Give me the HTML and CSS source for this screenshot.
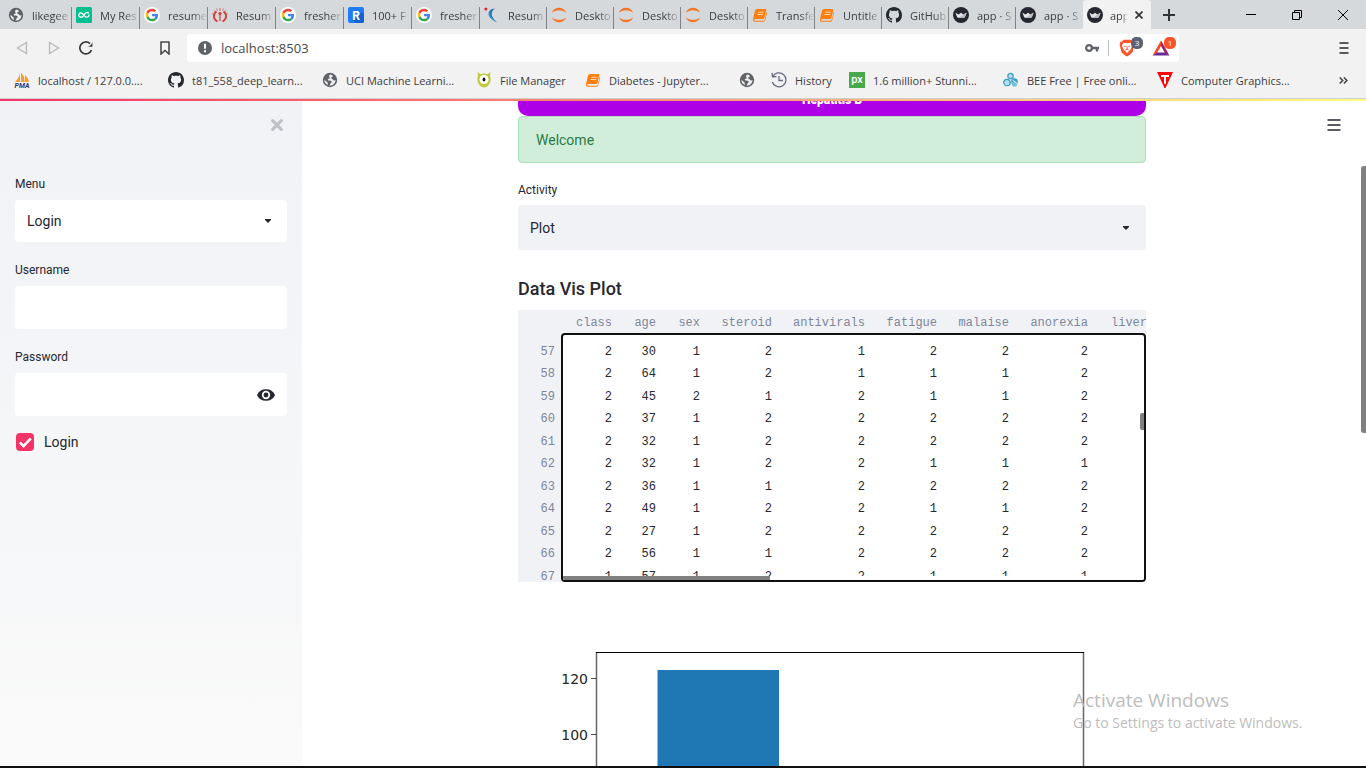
FILE: index.html
```html
<!DOCTYPE html>
<html lang="en">
<head>
<meta charset="utf-8">
<title>app · Streamlit</title>
<link rel="stylesheet" href="styles.css">
</head>
<body>
<svg class="sprite" aria-hidden="true">
  <symbol id="i-globe" viewBox="0 0 16 16"><circle cx="8" cy="8" r="7.2" fill="#5f6368"/><path d="M8.6 2.6c-1.6.5-2 1.8-1.1 2.8.7.8-.2 1.3-.9 1.4-1 .2-1.1 1.3-.3 1.7 1.2.5 3.200 0 3.400 1.200.1.900-1.200 1-1.300 2-.1.800-.8 1.400-1.500 1.700 3.200.7 6.600-1.500 6.600-5.400-1 .8-2.300.3-2.700-.5-.5-1-1.800-.7-1.700-1.700.1-.9 1.700-.6 1.900-1.600-.7-.8-1.500-1.300-2.400-1.600z" fill="#eceeef"/><path d="M2.400 7.800l3.200 2.600.3 2.700C3.700 12.300 2.300 10.200 2.400 7.800z" fill="#eceeef"/></symbol>
  <symbol id="i-google" viewBox="0 0 48 48"><circle cx="24" cy="24" r="24" fill="#fff"/><g transform="translate(5 5) scale(.79)"><path fill="#EA4335" d="M24 9.500c3.540 0 6.710 1.220 9.210 3.600l6.850-6.850C35.900 2.380 30.470 0 24 0 14.620 0 6.510 5.380 2.560 13.220l7.980 6.190C12.430 13.720 17.740 9.500 24 9.500z"/><path fill="#4285F4" d="M46.980 24.550c0-1.570-.15-3.090-.38-4.550H24v9.020h12.940c-.58 2.960-2.260 5.480-4.780 7.180l7.730 6c4.510-4.180 7.090-10.360 7.090-17.650z"/><path fill="#FBBC05" d="M10.530 28.590c-.48-1.450-.76-2.990-.76-4.590s.27-3.140.76-4.590l-7.980-6.190C.92 16.460 0 20.120 0 24s.92 7.540 2.560 10.780l7.970-6.190z"/><path fill="#34A853" d="M24 48c6.480 0 11.930-2.130 15.890-5.810l-7.730-6c-2.150 1.450-4.920 2.300-8.160 2.300-6.260 0-11.570-4.220-13.470-9.910l-7.980 6.190C6.510 42.620 14.620 48 24 48z"/></g></symbol>
  <symbol id="i-github" viewBox="0 0 16 16"><path fill="#24292f" d="M8 0C3.580 0 0 3.580 0 8c0 3.540 2.290 6.530 5.470 7.590.4.070.55-.17.55-.38 0-.19-.01-.82-.01-1.490-2.010.37-2.530-.49-2.690-.94-.09-.23-.48-.94-.82-1.130-.28-.15-.68-.52-.01-.53.63-.01 1.080.58 1.230.82.72 1.210 1.870.87 2.330.66.07-.52.28-.87.51-1.070-1.780-.2-3.640-.89-3.640-3.950 0-.87.31-1.590.82-2.150-.08-.2-.36-1.020.08-2.120 0 0 .67-.21 2.200.82.64-.18 1.320-.27 2-.27.68 0 1.360.09 2 .27 1.530-1.040 2.200-.82 2.200-.82.44 1.100.16 1.920.08 2.120.51.56.82 1.270.82 2.150 0 3.070-1.870 3.750-3.650 3.950.29.25.54.73.54 1.480 0 1.070-.01 1.930-.01 2.200 0 .21.15.46.55.38A8.013 8.013 0 0 0 16 8c0-4.420-3.580-8-8-8z"/></symbol>
  <symbol id="i-jupyter" viewBox="0 0 16 16"><path d="M.8 5.800C3.200-.9 12.800-.9 15.200 5.800 11.500 2.300 4.500 2.300.8 5.800zM.8 10.200c2.400 6.700 12 6.700 14.400 0-3.700 3.500-10.700 3.500-14.400 0z" fill="#f37726"/></symbol>
  <symbol id="i-book" viewBox="0 0 16 16"><path d="M5 2h8.500q1 0 .8 1L12.400 11q-.3 1-1.400 1H3.200q-1 0-1 .8t1 .9h8.300q1 0 1.300-1.200L14.500 5q.7.400.5 1.300l-1.800 7q-.4 1.500-2 1.500H3q-2.300-.1-2-2.600L3 3.500Q3.500 2 5 2z" fill="#ff7f0e"/><path d="M6 5.200h5.800M5.400 7.500h5.800" stroke="#ffe0c0" stroke-width=".9"/></symbol>
  <symbol id="i-crown" viewBox="0 0 16 16"><circle cx="8" cy="8" r="8" fill="#262730"/><path d="M2.400 5.800l3.200 1.700L8 5.700l2.400 1.800 3.200-1.700-1.700 4.200q-.3.700-1 .7H5.100q-.7 0-1-.7z" fill="#e6e6e9"/><path d="M10.400 7.500l3.200-1.700-1.700 4.200q-.3.700-1 .7H6z" fill="#bcbcc2"/></symbol>
</svg>

<header class="browser">
  <div class="titlebar">
    <div class="tabs" role="tablist">
      <button class="tab tab-wide" role="tab"><svg class="icon"><use href="#i-globe"/></svg><span class="tab-text">likegee</span></button>
      <button class="tab tab-wide" role="tab"><svg class="icon" viewBox="0 0 16 16"><rect width="16" height="16" rx="1.500" fill="#00bf8f"/><path d="M12.800 6.300C10.900 4.500 9 6 8 8S4.800 11 3.300 9.600c-1.400-1.500 0-4 2-3.600 2.300.4 2.700 4 5 4.200 2 .1 2.900-1.500 2.600-2.700" fill="none" stroke="#fff" stroke-width="1.300"/></svg><span class="tab-text">My Res</span></button>
      <button class="tab tab-wide" role="tab"><svg class="icon"><use href="#i-google"/></svg><span class="tab-text">resume</span></button>
      <button class="tab tab-wide" role="tab"><svg class="icon" viewBox="0 0 16 16"><g fill="none" stroke="#d23c3c"><path d="M5.500 14.500C1 12.500.8 7 4.500 4.500M10.500 14.500c4.500-2 4.700-7.500 1-10" stroke-width="1.800"/><path d="M8 14V7" stroke-width="1.200"/><path d="M8 1v3M4.600 1.500l.8 2M11.400 1.500l-.8 2M1.800 3.500l1.500 1.300M14.200 3.500l-1.500 1.300M.3 7h1.600M15.700 7h-1.600" stroke-width="1" opacity=".7"/></g><circle cx="8" cy="6.500" r="1.600" fill="#d23c3c"/></svg><span class="tab-text">Resum</span></button>
      <button class="tab tab-wide" role="tab"><svg class="icon"><use href="#i-google"/></svg><span class="tab-text">fresher</span></button>
      <button class="tab tab-wide" role="tab"><svg class="icon" viewBox="0 0 16 16"><rect width="16" height="16" rx="2" fill="#1f7cf5"/><path d="M5 13l9-8 2 2v7q0 2-2 2H8z" fill="#1462cc"/><text x="8" y="12.500" text-anchor="middle" class="mark mark-lg">R</text></svg><span class="tab-text">100+ F</span></button>
      <button class="tab tab-wide" role="tab"><svg class="icon"><use href="#i-google"/></svg><span class="tab-text">fresher</span></button>
      <button class="tab" role="tab"><svg class="icon" viewBox="0 0 16 16"><path d="M11 1.500C3.500 2 3.500 9 13 15.500 6.500 9.500 6 5 11 1.500z" fill="#1769aa"/><path d="M8.500 1.500C1.500 5 4 11.500 13 15.500 5.500 10 5 5.500 8.500 1.500z" fill="#2d8dd0"/><circle cx="1.800" cy="2" r="1.500" fill="#e8202a"/></svg><span class="tab-text">Resum</span></button>
      <button class="tab" role="tab"><svg class="icon"><use href="#i-jupyter"/></svg><span class="tab-text">Deskto</span></button>
      <button class="tab" role="tab"><svg class="icon"><use href="#i-jupyter"/></svg><span class="tab-text">Deskto</span></button>
      <button class="tab" role="tab"><svg class="icon"><use href="#i-jupyter"/></svg><span class="tab-text">Deskto</span></button>
      <button class="tab" role="tab"><svg class="icon"><use href="#i-book"/></svg><span class="tab-text">Transfe</span></button>
      <button class="tab" role="tab"><svg class="icon"><use href="#i-book"/></svg><span class="tab-text">Untitle</span></button>
      <button class="tab" role="tab"><svg class="icon"><use href="#i-github"/></svg><span class="tab-text">GitHub</span></button>
      <button class="tab" role="tab"><svg class="icon"><use href="#i-crown"/></svg><span class="tab-text">app · S</span></button>
      <button class="tab" role="tab"><svg class="icon"><use href="#i-crown"/></svg><span class="tab-text">app · S</span></button>
      <button class="tab tab-wide tab-active" role="tab" aria-selected="true"><svg class="icon"><use href="#i-crown"/></svg><span class="tab-text">app</span><svg class="tab-close" viewBox="0 0 8 8"><path d="M.5.5l7 7M7.500.5l-7 7" stroke="#333" stroke-width="1.700"/></svg></button>
    </div>
    <button class="new-tab" aria-label="New tab"><svg width="12" height="12" viewBox="0 0 12 12"><path d="M6 0v12M0 6h12" stroke="#333" stroke-width="2"/></svg></button>
    <div class="window-controls">
      <button aria-label="Minimize"><svg width="10" height="10"><path d="M0 4.500h10" stroke="#000"/></svg></button>
      <button aria-label="Restore"><svg width="10" height="10"><path d="M.5 2.500h7v7h-7zM2.500 2.500v-2h7v7h-2" fill="none" stroke="#000"/></svg></button>
      <button aria-label="Close"><svg width="10" height="10"><path d="M0 0l10 10M10 0L0 10" stroke="#000"/></svg></button>
    </div>
  </div>

  <div class="toolbar">
    <div class="nav-buttons">
      <button aria-label="Back"><svg width="12" height="14" viewBox="0 0 12 14"><path d="M10.500 1.500v11L1.500 7z" fill="none" stroke="#b9bbbd" stroke-width="1.400"/></svg></button>
      <button aria-label="Forward"><svg width="12" height="14" viewBox="0 0 12 14"><path d="M1.500 1.500v11L10.500 7z" fill="none" stroke="#b9bbbd" stroke-width="1.400"/></svg></button>
      <button aria-label="Reload"><svg width="14" height="14" viewBox="0 0 14 14"><path d="M12.500 9A6 6 0 1 1 11 2.600" fill="none" stroke="#3b3b3d" stroke-width="1.700"/><path d="M13.400.8v5H8.400q4-.8 5-5z" fill="#3b3b3d"/></svg></button>
    </div>
    <button class="bookmark-page" aria-label="Bookmark this page"><svg width="10" height="14" viewBox="0 0 10 14"><path d="M1 1h8v12L5 9.500 1 13z" fill="none" stroke="#4a4a4c" stroke-width="1.600"/></svg></button>
    <div class="address">
      <svg width="14" height="14" viewBox="0 0 14 14"><circle cx="7" cy="7" r="7" fill="#5f6368"/><path d="M7 2.800v5M7 9.300v2" stroke="#fff" stroke-width="2"/></svg>
      <input class="url" type="text" aria-label="Address" value="localhost:8503">
      <svg width="14" height="10" viewBox="0 0 14 10"><circle cx="4" cy="5" r="2.900" fill="none" stroke="#5f6368" stroke-width="2.200"/><path d="M7 5h7M12 5v3.500" stroke="#5f6368" stroke-width="2.400"/></svg>
      <span class="divider"></span>
      <button class="extension" aria-label="Brave Shields"><svg width="16" height="18" viewBox="0 0 16 18"><path d="M4.500.8h7L13 2.500l1.600.2.800 2.500-1.700 7.500Q13 14.500 8 17.500 3 14.500 2.300 12.700L.6 5.200l.8-2.500L3 2.500z" fill="#fb542b"/><path d="M4.500 3.700l3.500.6 3.500-.6 1.700 2.700-1.700 4-3.500 3.500-3.500-3.500-1.700-4z" fill="#fff"/><path d="M5 7l1.800.7M11 7l-1.800.7M8 7.500v2.700M6.300 11l1.700-.8 1.700.8" fill="none" stroke="#fb542b" stroke-width=".9"/></svg><span class="badge badge-gray">3</span></button>
      <button class="extension" aria-label="Brave Rewards"><svg width="18" height="18" viewBox="0 0 18 18"><path d="M9 1.500L.5 16.500 5 14l4-7z" fill="#ff4724"/><path d="M9 1.500l8.500 15L13 14 9 7z" fill="#9e1f63"/><path d="M.5 16.500h17L13 13.500H5z" fill="#662d91"/></svg><span class="badge badge-red">1</span></button>
    </div>
    <button class="app-menu" aria-label="Customize"><svg width="10" height="12" viewBox="0 0 10 12"><path d="M.5 1h9M.5 6h9M.5 11h9" stroke="#5a5a5c" stroke-width="1.900"/></svg></button>
  </div>

  <nav class="bookmarks" aria-label="Bookmarks">
    <a href="#"><svg class="icon" viewBox="0 0 16 16"><path d="M6 1v9H1q3.500-3 5-9zM7 .5q4 4 3.500 9.500H7zM11 3q3.500 3 4 7h-4z" fill="#f89c2e"/><text x="8" y="15.500" text-anchor="middle" class="mark mark-pma">PMA</text></svg>localhost / 127.0.0....</a>
    <a href="#"><svg class="icon"><use href="#i-github"/></svg>t81_558_deep_learn...</a>
    <a href="#"><svg class="icon"><use href="#i-globe"/></svg>UCI Machine Learni...</a>
    <a href="#"><svg class="icon" viewBox="0 0 16 16"><path d="M1.500 0l3 2.200q3.500-1.400 7 0l3-2.200-.5 4q1.200 2.800.3 6Q12.500 15 8 15.500 3.500 15 1.700 10q-.9-3.200.3-6z" fill="#c0ca3c"/><circle cx="8" cy="7.500" r="4.500" fill="#fff"/><ellipse cx="8" cy="7.500" rx="1.400" ry="2" fill="#111"/></svg>File Manager</a>
    <a href="#"><svg class="icon"><use href="#i-book"/></svg>Diabetes - Jupyter...</a>
    <a href="#" aria-label="Untitled bookmark"><svg class="icon"><use href="#i-globe"/></svg></a>
    <a href="#"><svg class="icon" viewBox="0 0 16 16"><path d="M1.800 4.500A7 7 0 1 1 1.300 10M1 .8l.5 4 4-.3M8 4v4.500h4" fill="none" stroke="#676a80" stroke-width="1.300"/></svg>History</a>
    <a href="#"><svg class="icon" viewBox="0 0 16 16"><rect width="16" height="16" fill="#48a84c"/><text x="8" y="11" text-anchor="middle" class="mark mark-px">px</text></svg>1.6 million+ Stunni...</a>
    <a href="#"><svg class="icon" viewBox="0 0 16 16"><g fill="#b6dfed" stroke="#3c9fc4" stroke-width="1.300"><circle cx="7.500" cy="4" r="2.700"/><circle cx="4" cy="10.500" r="3.200"/></g><circle cx="11.500" cy="9.500" r="3.300" fill="#3c9fc4"/><circle cx="11.500" cy="12" r="2.700" fill="#74c0dc"/><path d="M9.500 8l4 3" stroke="#fff" stroke-width=".9"/></svg>BEE Free | Free onli...</a>
    <a href="#"><svg class="icon" viewBox="0 0 16 16"><path d="M0 0h16L8.500 16h-1z" fill="#f80808"/><path d="M4 3h8v2H9v6l-1 1.500L7 11V5H4z" fill="#fff"/></svg>Computer Graphics...</a>
    <button class="more" aria-label="More bookmarks"><svg width="9" height="7" viewBox="0 0 9 7"><path d="M.7.5l3 3-3 3M4.900.5l3 3-3 3" fill="none" stroke="#444" stroke-width="1.500"/></svg></button>
  </nav>
</header>

<div class="app">
  <aside class="sidebar">
    <button class="sidebar-close" aria-label="Close sidebar"><svg width="12" height="12" viewBox="0 0 12 12"><path d="M1.700 1.700l8.600 8.600M10.300 1.700l-8.600 8.600" stroke="#bfc1c6" stroke-width="3.200" stroke-linecap="round"/></svg></button>
    <form class="login">
      <div class="field">
        <label for="menu">Menu</label>
        <div class="control">
          <select id="menu"><option>Login</option></select>
          <svg class="caret" width="6" height="4"><path d="M0 0h6v1L3 4 0 1z"/></svg>
        </div>
      </div>
      <div class="field">
        <label for="username">Username</label>
        <div class="control"><input id="username" type="text"></div>
      </div>
      <div class="field">
        <label for="password">Password</label>
        <div class="control">
          <input id="password" type="password">
          <button class="reveal" type="button" aria-label="Show password"><svg width="18" height="12" viewBox="0 0 18 12"><path d="M0 6Q2.500.2 9 .2T18 6q-2.500 5.800-9 5.800T0 6z" fill="#262730"/><circle cx="9" cy="6" r="3.300" fill="#262730" stroke="#fff" stroke-width="1.700"/></svg></button>
        </div>
      </div>
      <label class="check"><span class="tick"><input type="checkbox" checked><svg width="18" height="18" viewBox="0 0 18 18"><path d="M3.800 9.300l3.700 3.800 7.300-7.700" fill="none" stroke="#fff" stroke-width="2.600"/></svg></span>Login</label>
    </form>
  </aside>

  <main class="main">
    <div class="content">
      <div class="banner"><h1>Hepatitis B</h1></div>
      <div class="alert" role="status">Welcome</div>
      <div class="field activity">
        <label for="activity">Activity</label>
        <div class="control">
          <select id="activity"><option>Plot</option></select>
          <svg class="caret" width="6" height="4"><path d="M0 0h6v1L3 4 0 1z"/></svg>
        </div>
      </div>
      <h2>Data Vis Plot</h2>
      <div class="frame">
        <table>
          <colgroup><col class="c-index"><col class="c-class"><col class="c-short"><col class="c-short"><col class="c-mid"><col class="c-wide"><col class="c-mid"><col class="c-mid"><col class="c-long"><col class="c-wide"></colgroup>
          <thead><tr><th></th><th>class</th><th>age</th><th>sex</th><th>steroid</th><th>antivirals</th><th>fatigue</th><th>malaise</th><th>anorexia</th><th class="cut">liver</th></tr></thead>
          <tbody>
            <tr><th>57</th><td>2</td><td>30</td><td>1</td><td>2</td><td>1</td><td>2</td><td>2</td><td>2</td><td></td></tr>
            <tr><th>58</th><td>2</td><td>64</td><td>1</td><td>2</td><td>1</td><td>1</td><td>1</td><td>2</td><td></td></tr>
            <tr><th>59</th><td>2</td><td>45</td><td>2</td><td>1</td><td>2</td><td>1</td><td>1</td><td>2</td><td></td></tr>
            <tr><th>60</th><td>2</td><td>37</td><td>1</td><td>2</td><td>2</td><td>2</td><td>2</td><td>2</td><td></td></tr>
            <tr><th>61</th><td>2</td><td>32</td><td>1</td><td>2</td><td>2</td><td>2</td><td>2</td><td>2</td><td></td></tr>
            <tr><th>62</th><td>2</td><td>32</td><td>1</td><td>2</td><td>2</td><td>1</td><td>1</td><td>1</td><td></td></tr>
            <tr><th>63</th><td>2</td><td>36</td><td>1</td><td>1</td><td>2</td><td>2</td><td>2</td><td>2</td><td></td></tr>
            <tr><th>64</th><td>2</td><td>49</td><td>1</td><td>2</td><td>2</td><td>1</td><td>1</td><td>2</td><td></td></tr>
            <tr><th>65</th><td>2</td><td>27</td><td>1</td><td>2</td><td>2</td><td>2</td><td>2</td><td>2</td><td></td></tr>
            <tr><th>66</th><td>2</td><td>56</td><td>1</td><td>1</td><td>2</td><td>2</td><td>2</td><td>2</td><td></td></tr>
            <tr><th>67</th><td>1</td><td>57</td><td>1</td><td>2</td><td>2</td><td>1</td><td>1</td><td>1</td><td></td></tr>
          </tbody>
        </table>
        <div class="focus-ring"><span class="thumb-x"></span><span class="thumb-y"></span></div>
      </div>
      <svg class="chart" viewBox="0 0 628 440" role="img" aria-label="Bar chart of class counts">
        <path d="M139.500 38h121.500v402h-121.500z" fill="#1f77b4"/>
        <path d="M78 20.500h488" stroke="#000" stroke-width="1"/>
        <path d="M78.500 20v420M565.500 20v420" stroke="#000" stroke-width="1.500" opacity=".6"/>
        <path d="M73 46.500h5M73 102.500h5" stroke="#000" opacity=".7"/>
        <g class="axis"><text x="70" y="52" text-anchor="end">120</text><text x="70" y="108" text-anchor="end">100</text></g>
      </svg>
    </div>
    <button class="page-menu" aria-label="Main menu"><svg width="14" height="12" viewBox="0 0 14 12"><path d="M.5 1h13M.5 6h13M.5 11h13" stroke="#262730" stroke-width="1.400"/></svg></button>
    <span class="page-thumb"></span>
  </main>
</div>
<div class="taskbar-edge"></div>
<div class="watermark"><p class="watermark-title">Activate Windows</p><p>Go to Settings to activate Windows.</p></div>
</body>
</html>
```
FILE: styles.css
```css
* { box-sizing: border-box; }
body {
  margin: 0;
  height: 100vh;
  display: flex;
  flex-direction: column;
  overflow: hidden;
  position: relative;
  font-family: Roboto, "Liberation Sans", sans-serif;
  font-size: 14px;
  color: #262730;
  background: #fff;
}
button { border: 0; padding: 0; background: none; font: inherit; color: inherit; display: flex; align-items: center; justify-content: center; }
input, select { font: inherit; color: inherit; }
svg { flex: none; display: block; }
h1, h2, p { margin: 0; }
.sprite { position: absolute; width: 0; height: 0; }
.icon { width: 16px; height: 16px; }

/* Browser frame */
.browser {
  flex: none;
  font-family: "Open Sans", "Noto Sans", sans-serif;
  font-size: 11px;
  color: #3c3c3e;
  background: #f2f2f2;
  border-bottom: 1px solid #cdd0d4;
}
.titlebar { display: flex; height: 29px; background: #d6d9dc; }
.tabs { flex: 0 1 1151px; display: flex; padding-left: 4px; min-width: 0; }
.tab {
  flex: 0 1 67px;
  min-width: 0;
  justify-content: flex-start;
  gap: 8px;
  padding: 1px 0 0 4px;
  background: linear-gradient(#808387, #808387) right 7px / 1px 22px no-repeat;
}
.tab-wide { flex-basis: 68px; }
.tab:nth-last-child(2) { background: none; }
.tab-text {
  flex: 1 1 0;
  min-width: 0;
  overflow: hidden;
  text-align: left;
  white-space: nowrap;
  mask-image: linear-gradient(to right, #000 60%, transparent);
}
.tab-active { background: #f2f2f2; border-radius: 4px 4px 0 0; padding-right: 8px; gap: 7px; }
.tab-close { width: 8px; height: 8px; }
.new-tab { width: 36px; }
.window-controls { display: flex; margin-left: auto; }
.window-controls button { width: 46px; }

.toolbar { display: flex; align-items: center; height: 38px; padding-right: 16px; }
.nav-buttons { display: flex; padding-left: 6px; }
.nav-buttons button { width: 32px; }
.bookmark-page { width: 32px; margin-left: 47px; }
.address {
  flex: 0 1 992px;
  display: flex;
  align-items: center;
  height: 28px;
  margin-left: 6px;
  padding: 0 9px 0 11px;
  background: #fff;
  border-radius: 4px;
}
.url { flex: 1; min-width: 0; border: 0; outline: 0; padding: 0 9px; background: none; font-size: 13px; color: #48484a; }
.divider { width: 1px; height: 16px; margin: 0 10px 0 9px; background: #bbb; }
.extension { position: relative; margin-right: 17px; }
.extension:last-child { margin-right: 0; }
.badge {
  position: absolute;
  left: 12px;
  top: -2px;
  width: 12px;
  height: 12px;
  border-radius: 5px;
  color: #fff;
  font-size: 8px;
  line-height: 12px;
  text-align: center;
}
.badge-gray { background: #5d6175; }
.badge-red { background: #fb542b; }
.app-menu { margin-left: auto; width: 12px; }

.bookmarks {
  display: grid;
  grid-template-columns: 154px 154px 154px 109px 154px 32px 78px 154px 154px 154px 1fr;
  align-items: center;
  height: 31px;
  padding: 0 18px 5px 14px;
}
.bookmarks a { display: flex; align-items: center; gap: 8px; color: inherit; text-decoration: none; white-space: nowrap; }
.more { justify-self: end; }
.mark { font-family: Roboto, sans-serif; font-weight: 700; fill: #fff; }
.mark-lg { font-size: 12px; }
.mark-px { font-size: 11px; font-weight: 500; }
.mark-pma { font-size: 7px; font-style: italic; fill: #34386b; }

/* App */
.app {
  flex: 1;
  min-height: 0;
  display: flex;
  padding-top: 2px;
  background: linear-gradient(to right, #f63366, #fffd80) top / 100% 2px no-repeat;
}
.sidebar { flex: none; width: 302px; padding: 18px 15px 0; background: linear-gradient(#f0f2f6, #fafafa); }
.sidebar-close { margin: 0 4px 45px auto; }
.field { display: flex; flex-direction: column; gap: 8px; margin-bottom: 20px; }
.field label { font-size: 12px; line-height: 16px; }
.control { position: relative; }
.control input, .control select {
  display: block;
  width: 100%;
  height: 43px;
  padding: 0 12px;
  border: 0;
  border-radius: 4px;
  background: #fff;
  appearance: none;
}
.control select { height: 42px; }
.caret { position: absolute; right: 16px; top: 50%; margin-top: -2px; fill: #262730; }
.reveal { position: absolute; right: 12px; top: 0; height: 100%; }
.check { display: inline-flex; align-items: center; gap: 10px; margin: -3px 0 0 1px; line-height: 18px; }
.tick { position: relative; display: block; width: 18px; height: 18px; }
.tick input { display: block; width: 18px; height: 18px; margin: 0; appearance: none; border-radius: 4px; background: #f63366; }
.tick svg { position: absolute; left: 0; top: 0; }

.main { flex: 1; min-width: 0; position: relative; overflow: hidden; background: #fff; padding: 0 4px 0 0; }
.content { max-width: 628px; margin: 0 auto; }
.banner {
  display: flex;
  align-items: flex-end;
  justify-content: center;
  height: 15px;
  padding-bottom: 8px;
  overflow: hidden;
  background: #ae00e6;
  border-radius: 0 0 10px 10px;
  color: #fff;
}
.banner h1 { font-size: 12px; font-weight: 900; line-height: 16px; }
.alert { padding: 14px 17px; line-height: 18px; border: 1px solid #abe0bb; border-radius: 4px; background: #d0eed9; color: #2a7a48; height: 47px; }
.activity { margin: 19px 0 0; gap: 7px; }
.activity select { height: 45px; background: #f0f2f6; }
.activity .caret { right: 17px; }
h2 { margin: 27px 0 9px; font-size: 18px; font-weight: 500; line-height: 24px; }

.frame { position: relative; height: 272px; overflow: hidden; background: #f0f2f6; }
table { width: 670px; table-layout: fixed; border-collapse: collapse; font-family: "Liberation Mono", monospace; font-size: 12px; }
.c-index { width: 44px; }
.c-class { width: 57px; }
.c-short { width: 44px; }
.c-mid { width: 72px; }
.c-wide { width: 93px; }
.c-long { width: 79px; }
th, td { padding: 0 7px 0 0; height: 23px; text-align: right; font-weight: 400; line-height: 16px; }
th { color: #7e869c; background: #f0f2f6; }
thead th { height: 24px; padding-top: 1px; }
th.cut { text-align: left; padding-left: 16px; }
td { background: #fff; }
tbody tr:nth-child(even) > * { height: 22px; }
tbody tr:first-child > * { height: 29px; padding-top: 6px; }
.focus-ring {
  position: absolute;
  left: 43px;
  right: 0;
  top: 23px;
  bottom: 0;
  border: 2px solid #101010;
  border-radius: 4px;
  overflow: hidden;
}
.thumb-x { position: absolute; left: 0; right: 0; bottom: 0; height: 4px; background: linear-gradient(#808080, #808080) left / 207px 4px no-repeat #fff; }
.thumb-y { position: absolute; right: 0; top: 78px; width: 4px; height: 17px; border-radius: 2px 0 0 2px; background: #808080; }
.chart { width: 100%; margin-top: 50px; }
.axis { font-family: "DejaVu Sans", sans-serif; font-size: 14px; fill: #262626; }
.page-menu { position: absolute; right: 25px; top: 18px; }
.page-thumb { position: absolute; right: 0; top: 65px; width: 5px; height: 267px; border-radius: 3px 0 0 3px; background: #808080; }

.taskbar-edge { flex: none; height: 2px; background: #101010; }
.watermark {
  position: absolute;
  right: 57px;
  bottom: 35px;
  width: 236px;
  font-family: "Open Sans", "Noto Sans", sans-serif;
  font-size: 14px;
  line-height: 20px;
  white-space: nowrap;
  color: #bdbdbd;
}
.watermark-title { font-size: 19px; line-height: 26px; }
```
